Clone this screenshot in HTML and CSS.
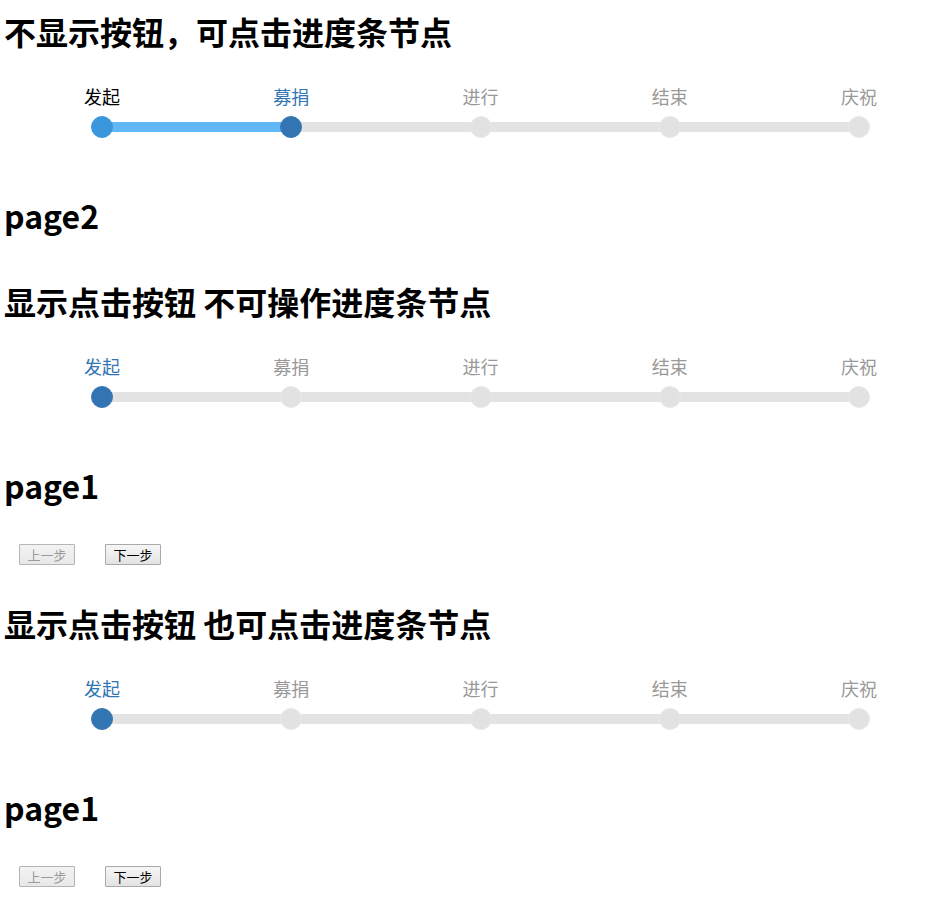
FILE: index.html
```html
<!DOCTYPE html>
<html lang="zh-CN">
<head>
<meta charset="utf-8">
<title>进度条</title>
<link rel="stylesheet" href="styles.css">
</head>
<body>
<section class="demo first">
  <h1 class="title">不显示按钮，可点击进度条节点</h1>
  <div class="steps">
    <div class="track"><div class="fill" style="width:189.25px"></div></div>
    <div class="step done"><span class="label">发起</span><span class="dot"></span></div>
    <div class="step current"><span class="label">募捐</span><span class="dot"></span></div>
    <div class="step"><span class="label">进行</span><span class="dot"></span></div>
    <div class="step"><span class="label">结束</span><span class="dot"></span></div>
    <div class="step"><span class="label">庆祝</span><span class="dot"></span></div>
  </div>
  <h1 class="page">page2</h1>
</section>

<section class="demo">
  <h1 class="title">显示点击按钮 不可操作进度条节点</h1>
  <div class="steps">
    <div class="track"></div>
    <div class="step current"><span class="label">发起</span><span class="dot"></span></div>
    <div class="step"><span class="label">募捐</span><span class="dot"></span></div>
    <div class="step"><span class="label">进行</span><span class="dot"></span></div>
    <div class="step"><span class="label">结束</span><span class="dot"></span></div>
    <div class="step"><span class="label">庆祝</span><span class="dot"></span></div>
  </div>
  <h1 class="page">page1</h1>
  <div class="buttons">
    <button class="btn" disabled>上一步</button>
    <button class="btn">下一步</button>
  </div>
</section>

<section class="demo">
  <h1 class="title">显示点击按钮 也可点击进度条节点</h1>
  <div class="steps">
    <div class="track"></div>
    <div class="step current"><span class="label">发起</span><span class="dot"></span></div>
    <div class="step"><span class="label">募捐</span><span class="dot"></span></div>
    <div class="step"><span class="label">进行</span><span class="dot"></span></div>
    <div class="step"><span class="label">结束</span><span class="dot"></span></div>
    <div class="step"><span class="label">庆祝</span><span class="dot"></span></div>
  </div>
  <h1 class="page">page1</h1>
  <div class="buttons">
    <button class="btn" disabled>上一步</button>
    <button class="btn">下一步</button>
  </div>
</section>
</body>
</html>
```

FILE: styles.css
```css
html, body {
  margin: 0;
  padding: 0;
  background: #fff;
  overflow: hidden;
}
body {
  padding: 11px 0 0 4px;
  font-family: "Noto Sans CJK SC", "Noto Sans", sans-serif;
  color: #000;
}
.demo {
  display: flex;
  flex-direction: column;
  margin-bottom: 38px;
}
.demo.first {
  margin-bottom: 46px;
}
.title, .page {
  margin: 0;
  font-size: 32px;
  line-height: 40px;
  font-weight: bold;
}
.steps {
  position: relative;
  display: flex;
  gap: 189.25px;
  padding-left: 98px;
  margin-top: 33px;
}
.track {
  position: absolute;
  left: 98px;
  top: 38px;
  width: 757px;
  height: 10px;
  background: #e3e3e3;
}
.fill {
  height: 100%;
  background: #62b8f7;
}
.step {
  position: relative;
  width: 0;
  display: flex;
  flex-direction: column;
  align-items: center;
}
.label {
  white-space: nowrap;
  font-size: 18px;
  line-height: 24px;
  color: #999;
}
.dot {
  margin-top: 8px;
  width: 20px;
  height: 20px;
  border-radius: 50%;
  background: #e2e2e2;
  border: 1px solid #e7e9ec;
  flex: none;
}
.step.done .label { color: #000; }
.step.done .dot { background: #3a97dc; border-color: #3a97dc; }
.step.current .label { color: #3375b3; }
.step.current .dot { background: #3375b3; border-color: #3a78b5; }
.page {
  margin-top: 57px;
}
.buttons {
  display: flex;
  gap: 30px;
  margin-top: 39px;
  padding-left: 15px;
}
.btn {
  width: 56px;
  height: 21px;
  padding: 0;
  margin: 0;
  font-family: "Noto Sans CJK SC", sans-serif;
  font-size: 13px;
  line-height: 19px;
  color: #000;
  background: linear-gradient(#f6f6f6, #e3e3e3);
  border: 1px solid #a9a9a9;
  border-radius: 1px;
}
.btn:disabled {
  color: #9a9a9a;
  background: linear-gradient(#f3f3f3, #e8e8e8);
  border-color: #b5b5b5;
}
```
